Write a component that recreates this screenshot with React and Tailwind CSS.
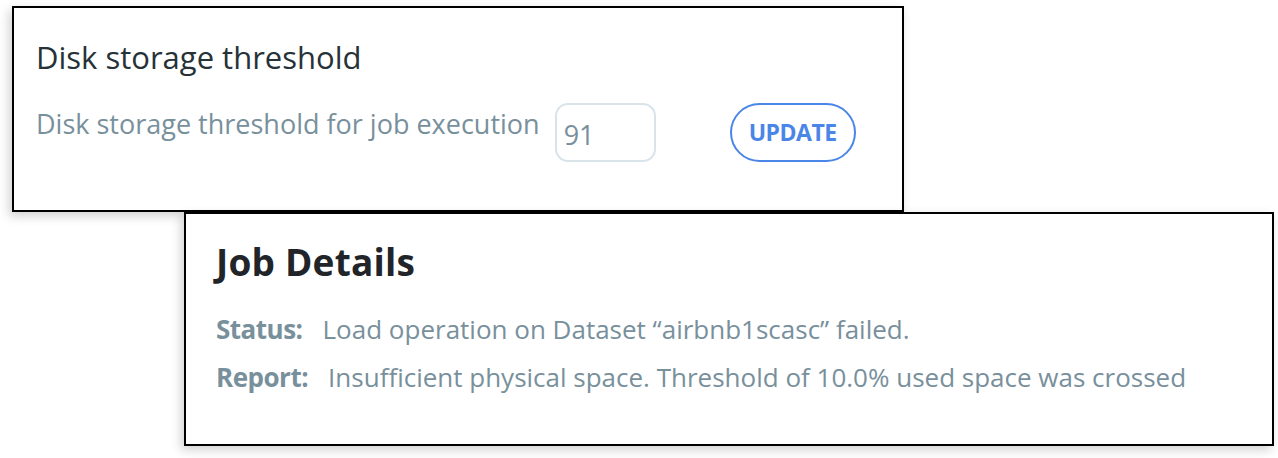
import React, { useState } from 'react';

const font = { fontFamily: '"Open Sans", "Noto Sans", sans-serif' };

const DiskThreshold = () => {
    const [value, setValue] = useState('91');

    return (
        <div className="ml-[12px] mt-[6px] w-[892px] h-[206px] border-2 border-black bg-white shadow-[-3px_4px_10px_rgba(0,0,0,0.18)] pl-[22px] pt-[34px]">
            <h2 className="text-[31px] leading-[31px] text-[#263238]">Disk storage threshold</h2>
            <div className="flex items-start mt-[30px]">
                <label htmlFor="threshold" className="mt-[7px] text-[27px] leading-[27px] text-[#78909c]">
                    Disk storage threshold for job execution
                </label>
                <input
                    id="threshold"
                    type="text"
                    value={value}
                    onChange={(e) => setValue(e.target.value)}
                    className="ml-[15px] w-[101px] h-[59px] border-2 border-[#d8e3ea] rounded-[13px] pl-[7px] pt-[4px] text-[27px] text-[#78909c] outline-none"
                    style={font}
                />
                <button
                    type="button"
                    className="ml-[74px] w-[126px] h-[59px] border-2 border-[#4a86e8] rounded-full text-[23px] font-bold tracking-[-0.5px] text-[#4a86e8]"
                    style={font}
                >
                    UPDATE
                </button>
            </div>
        </div>
    );
};

const JobDetails = () => (
    <div className="relative ml-[184px] w-[1090px] h-[234px] border-2 border-black bg-white shadow-[-3px_4px_10px_rgba(0,0,0,0.18)] pl-[30px] pt-[29px]">
        <h1 className="text-[37px] leading-[37px] font-bold tracking-[0.2px] text-[#212529]">Job Details</h1>
        <div className="mt-[36px] flex flex-col gap-[22px] text-[26px] leading-[26px] text-[#78909c]">
            <p>
                <span className="font-bold tracking-[-0.5px] mr-[20px]">Status:</span>
                Load operation on Dataset “airbnb1scasc” failed.
            </p>
            <p>
                <span className="font-bold tracking-[-0.5px] mr-[20px]">Report:</span>
                Insufficient physical space. Threshold of 10.0% used space was crossed
            </p>
        </div>
    </div>
);

export default function App() {
    return (
        <main className="w-[1278px] h-[458px] bg-white overflow-hidden" style={font}>
            <DiskThreshold />
            <JobDetails />
        </main>
    );
}
